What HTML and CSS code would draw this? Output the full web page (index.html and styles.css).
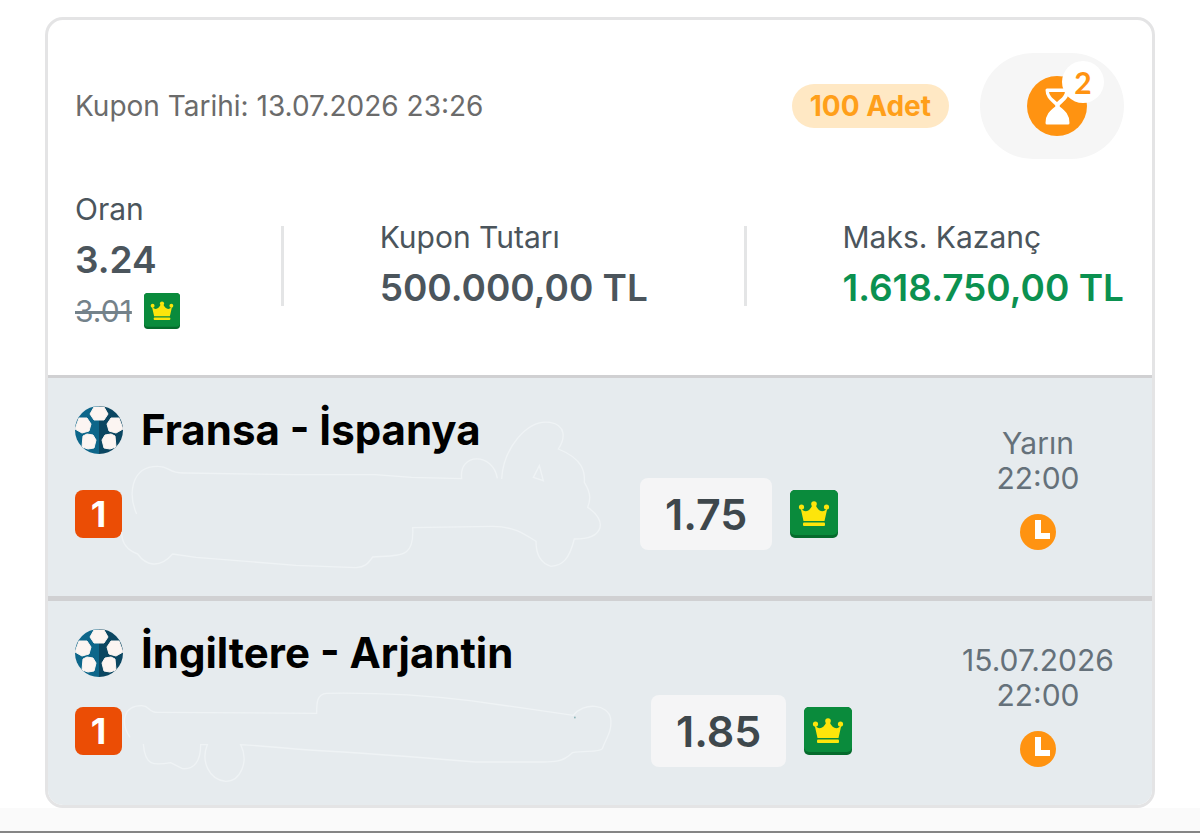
FILE: index.html
```html
<!DOCTYPE html>
<html lang="tr">
<head>
    <meta charset="UTF-8">
    <meta name="viewport" content="width=device-width, initial-scale=1.0">
    <title>Kupon Detayı</title>
    <link rel="stylesheet" href="styles.css">
</head>
<body>
    <!-- shared icons -->
    <svg class="icon-defs" width="0" height="0" aria-hidden="true">
        <symbol id="icon-crown" viewBox="0 0 48 48">
            <rect width="48" height="48" rx="5" fill="#056b2c"/>
            <rect width="48" height="45" rx="5" fill="#0a8b3c"/>
            <g fill="#fde50b">
                <circle cx="11.500" cy="17" r="2.600"/>
                <circle cx="24" cy="14" r="2.800"/>
                <circle cx="36.500" cy="17" r="2.600"/>
                <path d="M10.500 17.500C14 23 19 22.500 22.500 15h3C29 22.500 34 23 37.500 17.500L34.500 31h-21z"/>
                <rect x="13" y="32.500" width="22" height="3.500" rx="1"/>
            </g>
        </symbol>
        <symbol id="icon-ball" viewBox="0 0 48 48">
            <clipPath id="ball-clip"><circle cx="24" cy="24" r="24"/></clipPath>
            <g clip-path="url(#ball-clip)">
                <rect width="24" height="48" fill="#0d668a"/>
                <rect x="24" width="24" height="48" fill="#0b4661"/>
                <g fill="#fcf5f2" stroke="#fcf5f2" stroke-width="1" stroke-linejoin="round">
                    <path d="M19 1h10l4 7-4 6H19l-4-6z"/>
                    <path id="side" d="M4 12l8 0 4 6-2 7-7 2-7-4z"/>
                    <path d="M44 12l-8 0-4 6 2 7 7 2 7-4z"/>
                    <path d="M8 30l4-2 6 1 3 5-2 8-6 1-6-2z"/>
                    <path d="M40 30l-4-2-6 1-3 5 2 8 6 1 6-2z"/>
                </g>
            </g>
        </symbol>
        <symbol id="icon-clock" viewBox="0 0 36 36">
            <circle cx="18" cy="18" r="18" fill="#ff9311"/>
            <path d="M15 6h6v13h9v6H15z" fill="#fff"/>
        </symbol>
    </svg>

    <main class="coupon">
        <section class="summary">
            <div class="summary-top">
                <span class="coupon-date">Kupon Tarihi: 13.07.2026 23:26</span>
                <span class="count">100 Adet</span>
                <div class="status">
                    <svg class="status-icon" viewBox="0 0 60 60" aria-hidden="true">
                        <circle cx="30" cy="30" r="30" fill="#ff9311"/>
                        <path d="M20 14h21c0 7-5 10-9 14-1 1-1 3 0 4 5 4 9 7 9 15H20c0-8 4-11 9-15 1-1 1-3 0-4-4-4-9-7-9-14z" fill="#fff" stroke="#fff" stroke-width="3" stroke-linejoin="round"/>
                        <path d="M22 16h16c-1 5-4 6-8 10-4-4-7-5-8-10z" fill="#ff9311"/>
                    </svg>
                    <span class="status-badge">2</span>
                </div>
            </div>
            <div class="stats">
                <div class="stat stat-odds">
                    <span class="stat-label">Oran</span>
                    <strong class="stat-value">3.24</strong>
                    <div class="old-odds">
                        <s>3.01</s>
                        <svg class="crown-small" aria-hidden="true"><use href="#icon-crown"/></svg>
                    </div>
                </div>
                <div class="stat">
                    <span class="stat-label">Kupon Tutarı</span>
                    <strong class="stat-value">500.000,00 TL</strong>
                </div>
                <div class="stat">
                    <span class="stat-label">Maks. Kazanç</span>
                    <strong class="stat-value win">1.618.750,00 TL</strong>
                </div>
            </div>
        </section>

        <section class="match match-first">
            <div class="match-main">
                <div class="match-title">
                    <svg class="ball" aria-hidden="true"><use href="#icon-ball"/></svg>
                    <h2>Fransa - İspanya</h2>
                </div>
                <div class="market">
                    <span class="mbs">1</span>
                    <svg class="market-mark" width="518" height="72" viewBox="6 237 1554 216" aria-hidden="true">
                        <path d="M50 345C25 290 30 200 115 202c35 0 30 22 80 20l330 5 240 0 110 8 150 4C1015 160 1120 160 1132 238M1145 240C1150 150 1220 60 1290 70c50 8 45 50 25 80C1390 180 1395 220 1393 250c25 40 15 60 10 75 60 40 50 95-40 95-15 60-35 80-70 82-35-10-45-40-45-75-40-25-70-45-130-45l-240 4c5 90-30 82-120 88-15 22-25 30-50 32l-180-7-300-24-70-10c-40 45-80 35-105 0C10 450 5 420 5 400M1240 235l18-35 12 45z"/>
                    </svg>
                    <button type="button" class="odds">1.75</button>
                    <svg class="crown" aria-hidden="true"><use href="#icon-crown"/></svg>
                </div>
            </div>
            <div class="match-time">
                <span>Yarın</span>
                <span>22:00</span>
                <svg class="clock" aria-hidden="true"><use href="#icon-clock"/></svg>
            </div>
        </section>

        <section class="match">
            <div class="match-main">
                <div class="match-title">
                    <svg class="ball" aria-hidden="true"><use href="#icon-ball"/></svg>
                    <h2>İngiltere - Arjantin</h2>
                </div>
                <div class="market">
                    <span class="mbs">1</span>
                    <svg class="market-mark" width="529" height="72" viewBox="6 48 1587 216" aria-hidden="true">
                        <path d="M30 175C0 130 10 80 65 80c25 0 20 22 50 20l475 3c0-30 0-58 30-60 200-3 330 10 430 22l130 18 180 26c30-40 105-35 112 10 5 40-15 60-25 90-10 12-50 5-90 12-30 30-60 28-100 28l-190 0c-180-15-350-28-500-36-80-5-120-12-205-16 25 50 0 110-45 110-50-5-75-60-55-110l-20 0c0 50-20 75-55 72l-35-18C100 260 75 260 70 195"/>
                        <rect x="1362" y="113" width="5" height="5" class="speck"/>
                    </svg>
                    <button type="button" class="odds">1.85</button>
                    <svg class="crown" aria-hidden="true"><use href="#icon-crown"/></svg>
                </div>
            </div>
            <div class="match-time">
                <span>15.07.2026</span>
                <span>22:00</span>
                <svg class="clock" aria-hidden="true"><use href="#icon-clock"/></svg>
            </div>
        </section>
    </main>
    <footer class="page-end"></footer>
</body>
</html>
```

FILE: styles.css
```css
* {
    box-sizing: border-box;
}
body {
    margin: 0;
    min-height: 100vh;
    display: flex;
    flex-direction: column;
    font-family: Inter, "Liberation Sans", sans-serif;
    background-color: #fff;
    color: #4b555c;
}
svg {
    display: block;
    flex-shrink: 0;
}
.icon-defs {
    position: absolute;
}
.coupon {
    margin: 17px 45px 0;
    border: 3px solid #e4e4e5;
    border-radius: 18px;
    overflow: hidden;
}
.summary {
    padding: 33px 28px 42px 27px;
    border-bottom: 3px solid #d0d0d2;
}
.summary-top {
    display: flex;
    align-items: center;
}
.coupon-date {
    flex: 1;
    font-size: 28px;
    color: #6b6b6b;
}
.count {
    padding: 0 18px;
    border-radius: 22px;
    background-color: #ffe8c4;
    color: #ff9f1a;
    font-size: 28px;
    line-height: 44px;
    font-weight: 700;
}
.status {
    position: relative;
    display: flex;
    align-items: center;
    justify-content: center;
    width: 144px;
    height: 106px;
    margin-left: 31px;
    border-radius: 53px;
    background-color: #f6f6f6;
}
.status-icon {
    width: 60px;
    height: 60px;
    margin-left: 9px;
}
.status-badge {
    position: absolute;
    top: 8px;
    right: 20px;
    width: 42px;
    height: 42px;
    border-radius: 50%;
    background-color: #fff;
    color: #ff9311;
    font-family: Lato, sans-serif;
    font-size: 30px;
    line-height: 42px;
    font-weight: 700;
    text-align: center;
}

/* odds / stake / max win */
.stats {
    display: grid;
    grid-template-columns: 4fr 9fr auto;
    align-items: center;
    margin-top: 28px;
}
.stat {
    display: flex;
    flex-direction: column;
    justify-content: center;
    height: 80px;
    margin-top: 12px;
    padding-left: 96px;
    border-left: 3px solid #e4e5e6;
    white-space: nowrap;
}
.stat-odds {
    height: auto;
    margin-top: 0;
    padding-left: 0;
    border-left: 0;
}
.stat-label {
    font-size: 30px;
    line-height: 44px;
}
.stat-value {
    font-size: 37px;
    line-height: 58px;
    font-weight: 600;
}
.win {
    color: #0b9150;
}
.old-odds {
    display: flex;
    align-items: center;
    gap: 12px;
    height: 44px;
    color: #74828a;
    font-size: 30px;
}
.crown-small {
    width: 36px;
    height: 36px;
}

/* matches */
.match {
    display: flex;
    align-items: flex-end;
    justify-content: space-between;
    padding: 28px 28px 38px 27px;
    background-color: #e6ebee;
}
.match-main {
    display: flex;
    flex-direction: column;
    gap: 18px;
}
.match-first {
    padding-bottom: 46px;
    border-bottom: 5px solid #d0d0d2;
}
.match-first .match-main {
    gap: 24px;
}
.match-title {
    display: flex;
    align-items: center;
    gap: 18px;
}
.match-title h2 {
    margin: 0;
    color: #000;
    font-size: 42px;
    line-height: 48px;
    font-weight: 700;
}
.ball, .crown {
    width: 48px;
    height: 48px;
}
.market {
    display: flex;
    align-items: center;
}
.mbs {
    width: 47px;
    border-radius: 8px;
    background-color: #eb4d05;
    color: #fff;
    font-size: 36px;
    line-height: 48px;
    font-weight: 700;
    text-align: center;
}
.market-mark {
    overflow: visible;
    fill: none;
    stroke: #eff3f5;
    stroke-width: 4;
}
.speck {
    fill: #8db4b8;
    stroke: none;
}
.odds {
    height: 72px;
    margin-right: 18px;
    padding: 0 25px;
    border: 0;
    border-radius: 8px;
    background-color: #f5f5f6;
    color: #3e474c;
    font-family: inherit;
    font-size: 43px;
    font-weight: 600;
}
.match-time {
    display: flex;
    flex-direction: column;
    align-items: center;
    width: 172px;
    color: #65717a;
    font-size: 30px;
    line-height: 35px;
}
.clock {
    width: 36px;
    height: 36px;
    margin-top: 18px;
}

.page-end {
    flex: 1;
    min-height: 24px;
    background-color: #fafafa;
    border-bottom: 2px solid #858585;
}
```
